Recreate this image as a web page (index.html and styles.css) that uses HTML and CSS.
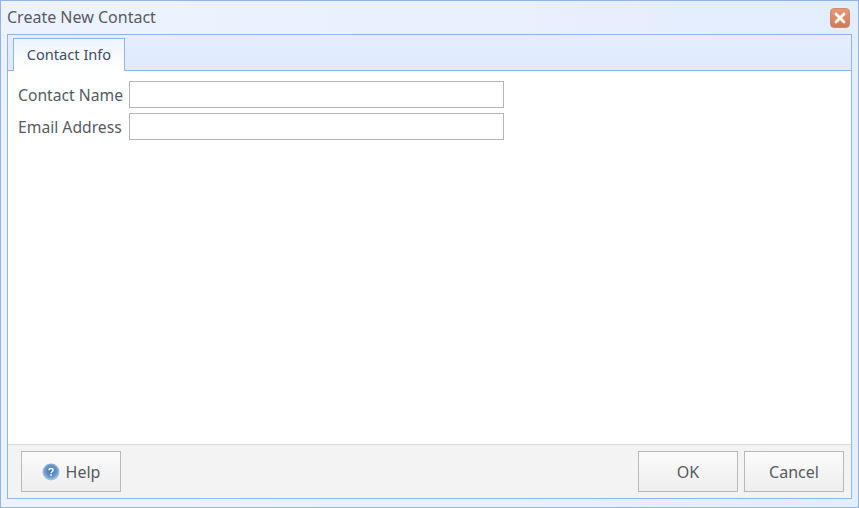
FILE: index.html
```html
<!DOCTYPE html>
<html lang="en">
<head>
    <meta charset="UTF-8">
    <meta name="viewport" content="width=device-width, initial-scale=1.0">
    <title>Create New Contact</title>
    <link rel="stylesheet" href="styles.css">
</head>
<body>
    <div class="dialog">
        <div class="titlebar">
            <span class="title">Create New Contact</span>
            <button class="close" aria-label="Close">
                <svg width="12" height="12" viewBox="0 0 12 12">
                    <path d="M2 2L10 10M10 2L2 10" stroke="#fff" stroke-width="2.8" stroke-linecap="round"/>
                </svg>
            </button>
        </div>

        <div class="panel">
            <div class="tabs">
                <div class="tab">Contact Info</div>
            </div>

            <div class="content">
                <div class="field">
                    <label for="contact_name">Contact Name</label>
                    <input type="text" id="contact_name">
                </div>
                <div class="field">
                    <label for="email_address">Email Address</label>
                    <input type="text" id="email_address">
                </div>
            </div>

            <div class="footer">
                <button class="btn">
                    <svg class="help-icon" width="18" height="18" viewBox="0 0 18 18">
                        <defs>
                            <radialGradient id="help_fill" cx="50%" cy="45%" r="55%">
                                <stop offset="0" stop-color="#3f73ad"/>
                                <stop offset="0.6" stop-color="#6495ca"/>
                                <stop offset="1" stop-color="#b4cde8"/>
                            </radialGradient>
                        </defs>
                        <circle cx="9" cy="9" r="8.5" fill="url(#help_fill)"/>
                        <path d="M6.9 7.2C7 6 7.9 5.4 9 5.4C10.2 5.4 11.1 6.1 11.1 7.1C11.1 8.5 9.1 8.7 9.1 10.3" fill="none" stroke="#fff" stroke-width="1.5"/>
                        <rect x="8.3" y="11.2" width="1.6" height="1.6" fill="#fff"/>
                    </svg>
                    Help
                </button>
                <div class="spacer"></div>
                <button class="btn">OK</button>
                <button class="btn">Cancel</button>
            </div>
        </div>
    </div>
</body>
</html>
```

FILE: styles.css
```css
:root {
    --border: #92b5e8;
    --text: #565b63;
    --btn-border: #b9b9b9;
}

* {
    margin: 0;
    padding: 0;
    box-sizing: border-box;
    font-family: "Noto Sans", "Open Sans", sans-serif;
}

html, body {
    height: 100%;
}

body {
    background: #fff;
    color: var(--text);
    font-size: 16px;
}

.dialog {
    display: flex;
    flex-direction: column;
    height: 508px;
    padding: 0 6px 8px;
    border: 1px solid var(--border);
    background: linear-gradient(to right, #edf3fe, #e9f0fe 60%, #e2edfe);
}

.titlebar {
    display: flex;
    align-items: center;
    justify-content: space-between;
    height: 33px;
    padding-bottom: 1px;
}

.title {
    font-size: 16px;
}

.close {
    display: flex;
    align-items: center;
    justify-content: center;
    width: 20px;
    height: 20px;
    margin-right: 2px;
    margin-top: 1px;
    border: 1px solid #c98a70;
    border-radius: 4px;
    background: linear-gradient(#e8987a, #d27a58);
}

.panel {
    flex: 1;
    display: flex;
    flex-direction: column;
    border: 1px solid var(--border);
    background: #fff;
}

.tabs {
    display: flex;
    align-items: flex-end;
    height: 36px;
    padding-left: 5px;
    border-bottom: 1px solid var(--border);
    background: linear-gradient(#e4eefd, #dfeafd);
}

.tab {
    width: 112px;
    height: 33px;
    margin-bottom: -1px;
    padding-top: 5px;
    border: 1px solid var(--border);
    border-bottom: none;
    background: linear-gradient(#eef4fe, #fff);
    text-align: center;
    font-size: 14.6px;
    color: #3f4d5e;
}

.content {
    flex: 1;
    display: flex;
    flex-direction: column;
    gap: 5px;
    padding: 10px 10px;
}

.field {
    display: flex;
    align-items: center;
}

.field label {
    width: 111px;
    padding-top: 1px;
    font-size: 15.7px;
    white-space: nowrap;
}

.field input {
    width: 375px;
    height: 27px;
    border: 1px solid #b5b5b5;
    background: #fff;
    outline: none;
}

.footer {
    display: flex;
    gap: 6px;
    height: 54px;
    padding: 6px 7px 6px 13px;
    border-top: 1px solid #dcdcdc;
    background: #f3f3f3;
}

.spacer {
    flex: 1;
}

.btn {
    display: flex;
    align-items: center;
    justify-content: center;
    gap: 6px;
    width: 100px;
    height: 41px;
    border: 1px solid var(--btn-border);
    background: linear-gradient(#fbfbfb, #eeeeee);
    color: var(--text);
    font-size: 16px;
}
```
